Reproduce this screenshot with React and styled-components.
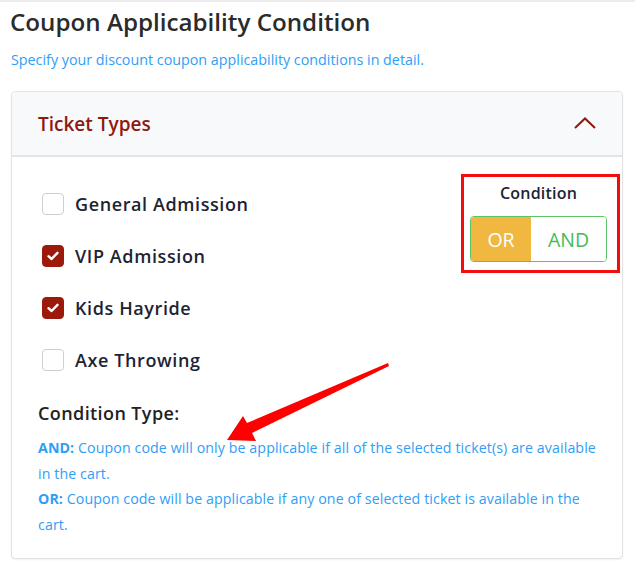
import React from "react";
import styled, { createGlobalStyle } from "styled-components";

const Global = createGlobalStyle`
  html, body { margin: 0; padding: 0; background: #fff; }
  body { font-family: "Open Sans", "Noto Sans", sans-serif; }
  * { box-sizing: border-box; }
`;

const Page = styled.div`
  position: relative;
  width: 635px;
  height: 567px;
  border-top: 2px solid #ececec;
  padding: 0 12px 0 11px;
  overflow: hidden;
`;

const Title = styled.h1`
  margin: 4px 0 0 -1px;
  font-size: 24.2px;
  line-height: 32px;
  font-weight: 600;
  color: #2b2b2b;
`;

const Subtitle = styled.p`
  margin: 13px 0 0;
  font-size: 14.3px;
  line-height: 18px;
  color: #2f9ef6;
`;

const Card = styled.section`
  margin-top: 22px;
  width: 612px;
  height: 468px;
  border: 1px solid #e2e2e2;
  border-radius: 4px;
  box-shadow: 0 1px 2px rgba(0, 0, 0, 0.06);
  overflow: hidden;
`;

const CardHeader = styled.header`
  height: 65px;
  background: #f8f9fb;
  border-bottom: 2px solid #e4e4e4;
  display: flex;
  align-items: center;
  justify-content: space-between;
  padding: 0 26px 0 26px;
`;

const HeaderTitle = styled.h2`
  margin: 0;
  font-size: 19px;
  font-weight: 600;
  color: #8e1a0f;
`;

const Chevron = styled.svg`
  width: 22px;
  height: 12px;
  margin-top: -2px;
`;

const CardBody = styled.div`
  padding: 17px 2px 0 26px;
`;

const TopRow = styled.div`
  display: flex;
  justify-content: space-between;
  align-items: flex-start;
`;

const List = styled.ul`
  list-style: none;
  margin: 4px 0 0;
  padding: 0;
`;

const Item = styled.li`
  height: 52px;
  display: flex;
  align-items: center;
  gap: 11px;
  padding-left: 4px;
`;

const Box = styled.span`
  width: 22px;
  height: 22px;
  border-radius: 4px;
  display: inline-flex;
  align-items: center;
  justify-content: center;
  background: ${(p) => (p.$checked ? "#9c1a0c" : "#fff")};
  border: 1px solid ${(p) => (p.$checked ? "#9c1a0c" : "#cfcfcf")};
`;

const Label = styled.span`
  font-size: 18px;
  font-weight: 600;
  letter-spacing: 0.6px;
  color: #1d2433;
`;

const ConditionBox = styled.div`
  width: 159px;
  height: 99px;
  border: 3px solid #f20d0d;
  display: flex;
  flex-direction: column;
  align-items: flex-start;
  padding: 5px 0 0 6px;
`;

const ConditionLabel = styled.div`
  width: 137px;
  text-align: center;
  font-size: 16px;
  font-weight: 600;
  letter-spacing: 0.2px;
  color: #1d2433;
  line-height: 22px;
`;

const Toggle = styled.div`
  margin-top: 12px;
  display: flex;
  width: 137px;
  height: 46px;
  border: 1px solid #5cc466;
  border-radius: 4px;
  overflow: hidden;
`;

const ToggleOption = styled.div`
  flex: ${(p) => (p.$active ? "0 0 60px" : "1")};
  display: flex;
  align-items: center;
  justify-content: center;
  font-size: 19.5px;
  background: ${(p) => (p.$active ? "#f0b840" : "#fff")};
  color: ${(p) => (p.$active ? "#fff" : "#47b956")};
`;

const TypeHeading = styled.h3`
  margin: 14px 0 0;
  font-size: 18px;
  line-height: 26px;
  font-weight: 600;
  letter-spacing: 0.4px;
  color: #222;
`;

const Desc = styled.p`
  margin: 9px 0 0;
  padding-right: 18px;
  font-size: 14.2px;
  line-height: 25.7px;
  color: #2f9ef6;
  letter-spacing: 0.1px;
`;

const Strong = styled.b`
  font-weight: 700;
`;

const Arrow = styled.svg`
  position: absolute;
  left: 0;
  top: 0;
  pointer-events: none;
`;

function Check() {
  return (
    <svg width="12" height="10" viewBox="0 0 12 10">
      <path d="M1.5 5.2 L4.6 8 L10.5 1.8" fill="none" stroke="#fff" strokeWidth="2.4" strokeLinecap="round" strokeLinejoin="round" />
    </svg>
  );
}

const tickets = [
  { name: "General Admission", checked: false },
  { name: "VIP Admission", checked: true },
  { name: "Kids Hayride", checked: true },
  { name: "Axe Throwing", checked: false },
];

export default function App() {
  return (
    <>
      <Global />
      <Page>
        <Title>Coupon Applicability Condition</Title>
        <Subtitle>Specify your discount coupon applicability conditions in detail.</Subtitle>
        <Card>
          <CardHeader>
            <HeaderTitle>Ticket Types</HeaderTitle>
            <Chevron viewBox="0 0 22 12">
              <path d="M1 11 L11 1.5 L21 11" fill="none" stroke="#8e1a0f" strokeWidth="2" />
            </Chevron>
          </CardHeader>
          <CardBody>
            <TopRow>
              <List>
                {tickets.map((t) => (
                  <Item key={t.name}>
                    <Box $checked={t.checked}>{t.checked && <Check />}</Box>
                    <Label>{t.name}</Label>
                  </Item>
                ))}
              </List>
              <ConditionBox>
                <ConditionLabel>Condition</ConditionLabel>
                <Toggle>
                  <ToggleOption $active>OR</ToggleOption>
                  <ToggleOption>AND</ToggleOption>
                </Toggle>
              </ConditionBox>
            </TopRow>
            <TypeHeading>Condition Type:</TypeHeading>
            <Desc>
              <Strong>AND:</Strong> Coupon code will only be applicable if all of the selected ticket(s) are available in the cart.
              <br />
              <Strong>OR:</Strong> Coupon code will be applicable if any one of selected ticket is available in the cart.
            </Desc>
          </CardBody>
        </Card>
        <Arrow width="635" height="567" viewBox="0 0 635 567">
          <polygon points="388,361 389,364 252,431 256,439 227,438 243,414 247,421" fill="#ff0000" />
        </Arrow>
      </Page>
    </>
  );
}
